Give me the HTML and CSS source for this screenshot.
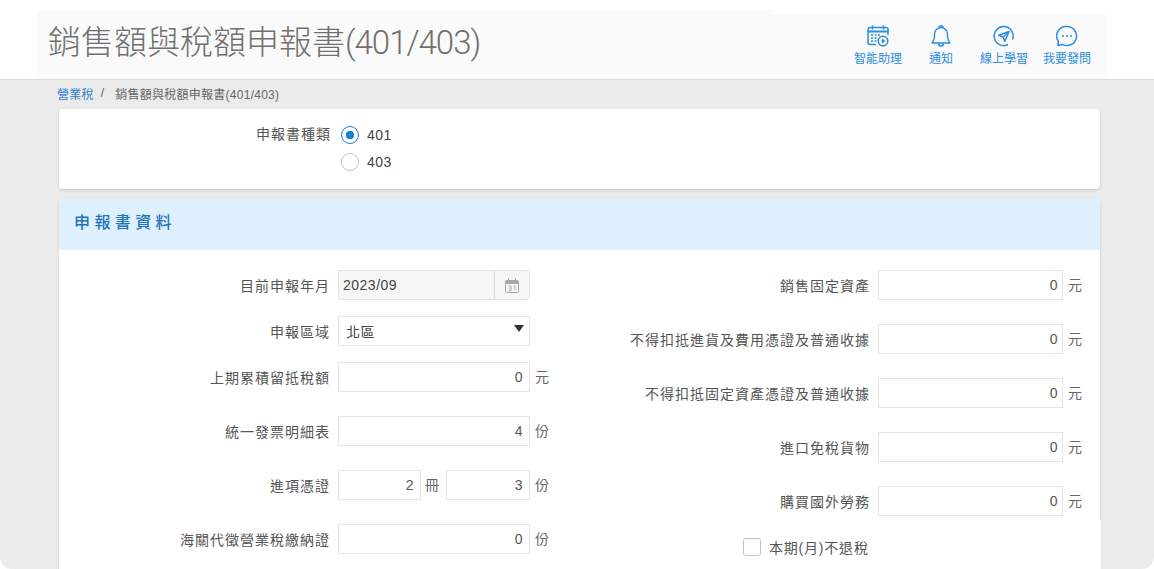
FILE: index.html
```html
<!DOCTYPE html>
<html lang="zh-Hant">
<head>
<meta charset="utf-8">
<title>銷售額與稅額申報書(401/403)</title>
<link rel="stylesheet" href="styles.css">
</head>
<body>
<header class="topbar">
  <div class="title-block"><h1>銷售額與稅額申報書<span class="title-code">(401/403)</span></h1></div>
  <nav class="tools">
    <a class="tool">
      <svg viewBox="0 0 22 22" width="22" height="22" fill="none" stroke="#2b8ce0" stroke-width="1.5"><path d="M9 19.500H3a2 2 0 0 1-2-2V4.500a2 2 0 0 1 2-2h16a2 2 0 0 1 2 2V10"/><path d="M1 6.500h20" stroke-width="2"/><path d="M5.500 .5v4M16.500 .5v4"/><path d="M4 10h2M7.500 10h2M11 10h2M4 13h2M7.500 13h2M4 16h2M7.500 16h2" stroke-width="1.300"/><circle cx="16" cy="16" r="4.800"/><path d="M15 13.800v4.400l3-2.200z" fill="#2b8ce0" stroke-width=".6"/></svg>
      <span>智能助理</span>
    </a>
    <a class="tool">
      <svg viewBox="0 0 22 22" width="22" height="22" fill="none" stroke="#2b8ce0" stroke-width="1.400"><path d="M2 18c1.800-1.800 2.500-3.500 2.500-6.500V9a6.500 6.500 0 0 1 13 0v2.500c0 3 .7 4.700 2.500 6.500z" stroke-linejoin="round"/><path d="M9 2.800a2 2 0 0 1 4 0"/><path d="M8.500 18.500a2.500 2.500 0 0 0 5 0"/></svg>
      <span>通知</span>
    </a>
    <a class="tool">
      <svg viewBox="0 0 22 22" width="22" height="22" fill="none" stroke="#2b8ce0" stroke-width="1.500"><path d="M15 19.500a9.500 9.500 0 1 1 4.500-5"/><path d="M16 6.500 5.800 10.300l4.300 1.700 1.700 4.300z" stroke-linejoin="round"/><path d="M16 6.500 10.100 12"/></svg>
      <span>線上學習</span>
    </a>
    <a class="tool">
      <svg viewBox="0 0 22 22" width="22" height="22" fill="none" stroke="#2b8ce0" stroke-width="1.500"><path d="M11 1.500a9.500 9.500 0 1 1-4 18.100L2 20.500l.4-4.200A9.500 9.500 0 0 1 11 1.500z" stroke-linejoin="round"/><circle cx="7" cy="11" r="1" fill="#2b8ce0" stroke="none"/><circle cx="11" cy="11" r="1" fill="#2b8ce0" stroke="none"/><circle cx="15" cy="11" r="1" fill="#2b8ce0" stroke="none"/></svg>
      <span>我要發問</span>
    </a>
  </nav>
</header>
<main class="page">
  <div class="crumbs"><a>營業稅</a><i>/</i><span>銷售額與稅額申報書(401/403)</span></div>
  <section class="card type-card">
    <div class="field-label type-label">申報書種類</div>
    <div class="radios">
      <label class="radio-row"><span class="radio on"></span>401</label>
      <label class="radio-row"><span class="radio"></span>403</label>
    </div>
  </section>
  <section class="card form-card">
    <h2 class="section-head">申報書資料</h2>
    <div class="form-grid">
      <div class="col col-left">
        <div class="row tight"><span class="field-label">目前申報年月</span>
          <div class="date-box"><span class="date-val">2023/09</span><span class="date-addon"><svg viewBox="0 0 14 15" width="14" height="15" fill="none" stroke="#a8a8a8"><rect x=".5" y="2.500" width="13" height="12" rx="1"/><path d="M.5 4.500h13" stroke-width="3"/><path d="M3.500 .5v2M10.500 .5v2"/><path d="M3.500 8h2.500v2H4.500M6 10v2.500H3.500M8.500 8.500l1.500-.8v5" stroke-width=".9"/></svg></span></div></div>
        <div class="row tight"><span class="field-label">申報區域</span>
          <div class="select-box"><span>北區</span><span class="caret"></span></div></div>
        <div class="row"><span class="field-label">上期累積留抵稅額</span><input class="num" value="0" readonly><span class="unit">元</span></div>
        <div class="row"><span class="field-label">統一發票明細表</span><input class="num" value="4" readonly><span class="unit">份</span></div>
        <div class="row"><span class="field-label">進項憑證</span><input class="num small" value="2" readonly><span class="unit mid">冊</span><input class="num small second" value="3" readonly><span class="unit">份</span></div>
        <div class="row"><span class="field-label">海關代徵營業稅繳納證</span><input class="num" value="0" readonly><span class="unit">份</span></div>
      </div>
      <div class="col col-right">
        <div class="row"><span class="field-label">銷售固定資產</span><input class="num" value="0" readonly><span class="unit">元</span></div>
        <div class="row"><span class="field-label">不得扣抵進貨及費用憑證及普通收據</span><input class="num" value="0" readonly><span class="unit">元</span></div>
        <div class="row"><span class="field-label">不得扣抵固定資產憑證及普通收據</span><input class="num" value="0" readonly><span class="unit">元</span></div>
        <div class="row"><span class="field-label">進口免稅貨物</span><input class="num" value="0" readonly><span class="unit">元</span></div>
        <div class="row last"><span class="field-label">購買國外勞務</span><input class="num" value="0" readonly><span class="unit">元</span></div>
        <div class="check-row"><span class="check"></span><span class="check-text">本期(月)不退稅</span></div>
      </div>
    </div>
  </section>
</main>
</body>
</html>
```
FILE: styles.css
```css
* { box-sizing: border-box; }
html, body { margin: 0; height: 569px; overflow: hidden; background: #fff; }
body {
  font-family: "Liberation Sans", "Noto Sans CJK TC", sans-serif;
  font-size: 14px;
  color: #444;
}
.topbar {
  height: 80px;
  padding: 0 47px 0 37px;
  display: flex;
  align-items: flex-end;
  border-bottom: 1px solid #dcdcdc;
}
.title-block {
  width: 736px;
  height: 69px;
  background: #fafafa;
  padding: 0 0 3px 11px;
  display: flex;
  align-items: center;
}
h1 {
  margin: 0;
  font-family: "Roboto", "Noto Sans CJK TC", sans-serif;
  font-weight: 300;
  font-size: 33px;
  line-height: 44px;
  color: #707070;
  white-space: nowrap;
}
.title-code { letter-spacing: -1px; }
.tools {
  flex: 1;
  height: 64px;
  background: #fafafa;
  display: flex;
  justify-content: flex-end;
  padding-right: 16px;
  gap: 15px;
}
.tool {
  width: 48px;
  padding-top: 10px;
  display: flex;
  flex-direction: column;
  align-items: center;
  color: #2b8ce0;
  font-size: 12px;
  line-height: 18px;
  white-space: nowrap;
}
.tool svg { display: block; margin-bottom: 3px; }
.page {
  height: 489px;
  background: #ebebeb;
  border-radius: 0 0 12px 12px;
  padding: 0 54px 0 59px;
  overflow: hidden;
}
.crumbs {
  height: 29px;
  padding-bottom: 3px;
  margin-left: -2px;
  display: flex;
  align-items: center;
  font-size: 12px;
  letter-spacing: .25px;
  color: #666;
}
.crumbs a { color: #2b7fc7; }
.crumbs i { font-style: normal; margin: 0 11px 0 7px; }
.card {
  background: #fff;
  border-radius: 4px;
  box-shadow: 0 1px 3px rgba(0,0,0,.15);
}
.type-card {
  height: 80px;
  display: flex;
  padding: 12px 0 0 0;
}
.field-label {
  letter-spacing: 1px;
  white-space: nowrap;
  text-align: right;
  color: #555;
}
.type-label { width: 272px; line-height: 27px; }
.radios { display: flex; flex-direction: column; margin-left: 10px; }
.radio-row { display: flex; align-items: center; height: 27px; gap: 8px; font-size: 14px; letter-spacing: .5px; }
.radio {
  width: 18px;
  height: 18px;
  border-radius: 50%;
  border: 1px solid #c4c4c4;
  background: #fff;
}
.radio.on {
  border: 1.500px solid #1a7fd8;
  background: radial-gradient(circle, #1a7fd8 0 4px, #fff 4.500px);
}
.form-card { margin-top: 10px; height: 500px; }
.section-head {
  margin: 0;
  height: 51px;
  line-height: 48px;
  padding-left: 15px;
  background: #def0fd;
  border-radius: 4px 4px 0 0;
  color: #1b75bc;
  font-size: 16px;
  font-weight: 500;
  letter-spacing: 4.400px;
}
.form-grid { display: flex; padding-top: 20px; }
.col { display: flex; flex-direction: column; }
.col-left { width: 541px; }
.col-right { width: 500px; }
.row { display: flex; align-items: center; height: 30px; margin-bottom: 24px; letter-spacing: .5px; }
.row.tight { margin-bottom: 16px; }
.row.last { margin-bottom: 4px; }
.row .field-label { flex: none; margin-right: 8px; }
.col-left .field-label { width: 271px; }
.col-right .row .field-label { width: 270px; }
.num {
  width: 192px;
  height: 30px;
  border: 1px solid #e5e5e5;
  padding: 0 6px 0 6px;
  text-align: right;
  font: 14px "Liberation Sans", "Noto Sans CJK TC", sans-serif;
  letter-spacing: .5px;
  color: #555;
  background: #fff;
  outline: none;
}
.col-right .num { width: 185px; padding-right: 4px; }
.num.small { width: 83px; }
.num.second { width: 84px; }
.unit { margin-left: 5px; padding-bottom: 2px; color: #666; }
.unit.mid { width: 15px; margin: 0 6px 0 4px; }
.date-box, .select-box {
  width: 192px;
  height: 30px;
  display: flex;
  align-items: center;
  border: 1px solid #e5e5e5;
}
.date-box { background: #f6f6f6; border-radius: 0 4px 4px 0; }
.date-val { flex: 1; padding-left: 4px; }
.date-addon {
  width: 35px;
  height: 28px;
  border-left: 1px solid #ddd;
  display: flex;
  align-items: center;
  justify-content: center;
}
.select-box { justify-content: space-between; padding: 0 3px 0 7px; }
.caret {
  width: 0;
  height: 0;
  border: 5px solid transparent;
  border-top: 7px solid #333;
  border-bottom: 0;
  margin: 0 2px 6px 0;
}
.check-row {
  height: 49px;
  margin-right: -1px;
  background: #fff;
  padding: 18px 0 0 143px;
  display: flex;
  align-items: flex-start;
  position: relative;
}
.check {
  width: 18px;
  height: 18px;
  border: 1px solid #c4c4c4;
  border-radius: 3px;
  margin-right: 8px;
}
.check-text { letter-spacing: .8px; color: #555; line-height: 20px; }
```
